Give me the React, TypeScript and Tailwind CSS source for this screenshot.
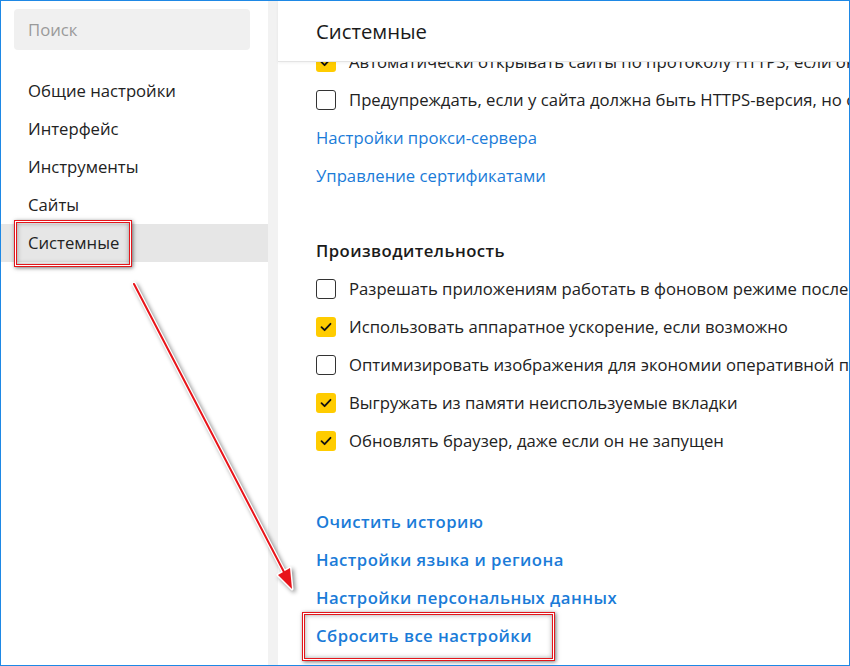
import React from 'react';

const font = { fontFamily: '"Open Sans", "Noto Sans", sans-serif' };

function Checkbox({ checked }: { checked: boolean }) {
  if (checked) {
    return (
      <span className="w-[20px] h-[20px] rounded-[3px] bg-[#ffcc00] flex items-center justify-center shrink-0">
        <svg width="14" height="14" viewBox="0 0 14 14" fill="none">
          <path d="M2.5 7.2 L5.6 10.2 L11.5 3.8" stroke="#111" strokeWidth="1.8" strokeLinecap="round" strokeLinejoin="round" />
        </svg>
      </span>
    );
  }
  return <span className="w-[20px] h-[20px] rounded-[3px] border-[1.5px] border-[#333] bg-white shrink-0" />;
}

function CheckRow({ checked, label }: { checked: boolean; label: string }) {
  return (
    <div className="h-[38px] flex items-center gap-[13px] whitespace-nowrap text-[#222]">
      <Checkbox checked={checked} />
      <span>{label}</span>
    </div>
  );
}

function RedBox({ className }: { className: string }) {
  return (
    <span
      className={`absolute pointer-events-none border border-[#e3161b] shadow-[inset_0_0_0_1px_#fff,inset_0_0_0_2px_#e3161b,inset_0_0_5px_2px_rgba(0,0,0,0.35),1px_1px_4px_rgba(0,0,0,0.55)] ${className}`}
    />
  );
}

const navItems = ['Общие настройки', 'Интерфейс', 'Инструменты', 'Сайты', 'Системные'];

export default function App() {
  return (
    <div
      className="relative w-[850px] h-[666px] overflow-hidden border border-[#1e88e5] bg-white flex text-[16.7px]"
      style={font}
    >
      {/* Sidebar */}
      <aside className="w-[267px] shrink-0 flex flex-col pt-[8px]">
        <div className="ml-[13px] mr-[18px] h-[41px] rounded-[4px] bg-[#f0f0f0] flex items-center px-[14px] text-[#9a9a9a]">
          Поиск
        </div>
        <nav className="mt-[22px] flex flex-col">
          {navItems.map((item) => {
            const active = item === 'Системные';
            return (
              <div
                key={item}
                className={`relative h-[38px] flex items-center pl-[27px] text-[#222] ${active ? 'bg-[#e6e6e6]' : ''}`}
              >
                <span className="relative">
                  {item}
                  {active && <RedBox className="-left-[14px] -right-[13px] -top-[10px] -bottom-[11px]" />}
                </span>
              </div>
            );
          })}
        </nav>
      </aside>

      <div className="w-[10px] shrink-0 bg-[#f2f2f2]" />

      {/* Main */}
      <main className="flex-1 flex flex-col min-w-0">
        <header className="relative z-10 h-[61px] shrink-0 flex items-center pl-[38px] bg-white border-b border-[#e4e4e4] shadow-[0_1px_3px_rgba(0,0,0,0.06)] text-[20.3px] text-[#1a1a1a]">
          Системные
        </header>
        <div className="flex-1 overflow-hidden pl-[38px]">
          <div className="-mt-[19px] flex flex-col">
            <CheckRow checked label="Автоматически открывать сайты по протоколу HTTPS, если он доступен" />
            <CheckRow checked={false} label="Предупреждать, если у сайта должна быть HTTPS-версия, но она недоступна" />
            <a className="h-[38px] flex items-center text-[#1a7bd8]">Настройки прокси-сервера</a>
            <a className="h-[38px] flex items-center text-[#1a7bd8]">Управление сертификатами</a>

            <div className="mt-[37px] h-[38px] flex items-center font-semibold tracking-[0.45px] text-[#1a1a1a]">
              Производительность
            </div>
            <CheckRow checked={false} label="Разрешать приложениям работать в фоновом режиме после закрытия браузера" />
            <CheckRow checked label="Использовать аппаратное ускорение, если возможно" />
            <CheckRow checked={false} label="Оптимизировать изображения для экономии оперативной памяти" />
            <CheckRow checked label="Выгружать из памяти неиспользуемые вкладки" />
            <CheckRow checked label="Обновлять браузер, даже если он не запущен" />

            <div className="mt-[43px] flex flex-col font-semibold tracking-[0.45px] text-[#1a7bd8]">
              <a className="h-[38px] flex items-center">Очистить историю</a>
              <a className="h-[38px] flex items-center">Настройки языка и региона</a>
              <a className="h-[38px] flex items-center">Настройки персональных данных</a>
              <div className="h-[38px] flex items-center">
                <a className="relative">
                  Сбросить все настройки
                  <RedBox className="-left-[14px] -right-[23px] -top-[11px] -bottom-[12px]" />
                </a>
              </div>
            </div>
          </div>
        </div>
      </main>

      {/* Annotation arrow */}
      <svg
        className="absolute inset-0 pointer-events-none"
        width="850"
        height="666"
        style={{ filter: 'drop-shadow(2px 2px 2px rgba(0,0,0,0.45))' }}
      >
        <line x1="133" y1="283" x2="284" y2="573" stroke="#fff" strokeWidth="4.5" strokeLinecap="round" />
        <polygon points="291,588 289,567 277,574" fill="#fff" stroke="#fff" strokeWidth="3" strokeLinejoin="round" />
        <line x1="133" y1="283" x2="284" y2="573" stroke="#e8141a" strokeWidth="2" strokeLinecap="round" />
        <polygon points="291,588 289,567 277,574" fill="#e8141a" />
      </svg>
    </div>
  );
}
